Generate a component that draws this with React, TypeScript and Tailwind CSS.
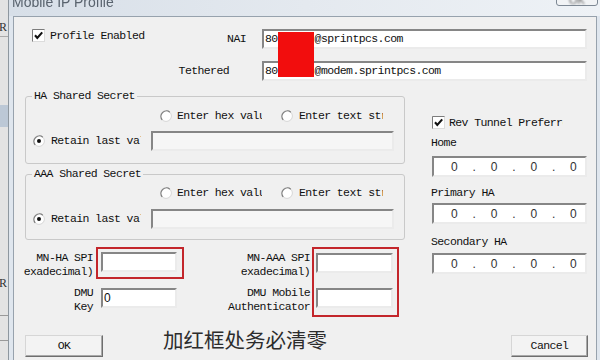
import React from 'react';

const mono = "font-['Liberation_Mono',monospace] text-[11.5px] tracking-[-0.6px] leading-[12px] text-[#101010]";
const sunken =
  'flex items-center border-2 border-t-[#868686] border-l-[#868686] border-r-[#ebebeb] border-b-[#ebebeb]';

interface FieldProps {
  className?: string;
  children?: React.ReactNode;
}

const Field: React.FC<FieldProps> = ({ className = '', children }) => (
  <div className={`${sunken} ${className}`}>{children}</div>
);

const Check: React.FC = () => (
  <svg width="13" height="13" viewBox="0 0 13 13" className="shrink-0">
    <rect x="0.5" y="0.5" width="12" height="12" fill="#fff" stroke="#dcdcdc" />
    <path d="M0.5 12.5V0.5H12.5" fill="none" stroke="#7c7c7c" />
    <path d="M3 6.3L5.3 9L10.2 3.4" fill="none" stroke="#111" strokeWidth="2.1" />
  </svg>
);

const Radio: React.FC<{ checked?: boolean }> = ({ checked }) => (
  <svg width="12" height="12" viewBox="0 0 12 12" className="shrink-0">
    <circle cx="6" cy="6" r="5.4" fill="#fff" stroke="#d6d6d6" />
    <path d="M2.2 9.8A5.4 5.4 0 0 1 9.8 2.2" fill="none" stroke="#7d7d7d" strokeWidth="1.2" />
    {checked && <circle cx="6" cy="6" r="2" fill="#111" />}
  </svg>
);

const IpField: React.FC<{ className: string }> = ({ className }) => (
  <Field
    className={`${className} ml-[1px] w-[155px] h-[21px] bg-white pl-[17px] font-['Liberation_Sans',sans-serif] text-[12px] tracking-normal text-[#333]`}
  >
    <span>0</span>
    <span className="w-[33px] text-center">.</span>
    <span>0</span>
    <span className="w-[33px] text-center">.</span>
    <span>0</span>
    <span className="w-[33px] text-center">.</span>
    <span>0</span>
  </Field>
);

interface GroupProps {
  title: string;
  className: string;
  radioMt: string;
  fieldMt: string;
}

const Group: React.FC<GroupProps> = ({ title, className, radioMt, fieldMt }) => (
  <fieldset className={`ml-[11px] w-[380px] border border-[#c9c9c9] rounded-[3px] ${className}`}>
    <legend className="ml-[6px] px-[2px] leading-[12px]">{title}</legend>
    <div className={`flex items-center h-[12px] ${radioMt}`}>
      <div className="ml-[134px] flex items-center gap-[5px]">
        <Radio />
        <span className="w-[85px] overflow-hidden whitespace-nowrap">Enter hex value</span>
      </div>
      <div className="ml-[19px] flex items-center gap-[6px]">
        <Radio />
        <span className="w-[84px] overflow-hidden whitespace-nowrap">Enter text string</span>
      </div>
    </div>
    <div className={`flex items-center h-[20px] ${fieldMt}`}>
      <div className="ml-[7px] flex items-center gap-[6px]">
        <Radio checked />
        <span className="w-[90px] overflow-hidden whitespace-nowrap">Retain last value</span>
      </div>
      <Field className="ml-[10px] w-[243px] h-[20px] bg-[#f6f6f6]" />
    </div>
  </fieldset>
);

const App: React.FC = () => {
  return (
    <div className="w-[600px] h-[360px] overflow-hidden flex bg-[#dfe6ee]">
      {/* window behind the dialog */}
      <div className="w-[9px] shrink-0 h-full bg-[#e3e3e3] border-r border-[#8e979f] overflow-hidden flex flex-col font-['Liberation_Serif',serif] text-[12px] leading-[12px] text-[#333]">
        <span className="mt-[21px] -ml-[1px]">R</span>
        <span className="mt-[3px] h-px bg-[#aaa]" />
        <span className="mt-[18px] -ml-[4px]">t</span>
        <span className="mt-[8px] -ml-[4px]">r</span>
        <span className="mt-[18px] h-[22px] bg-[#bcc8d6]" />
        <span className="mt-[150px] -ml-[1px]">R</span>
        <span className="mt-[26px] h-px bg-[#999]" />
        <span className="mt-[6px] -ml-[4px]">r</span>
        <span className="mt-[6px] h-px bg-[#999]" />
      </div>

      <div className="flex-1 min-w-0 flex flex-col">
        {/* title bar */}
        <div className="h-[16px] shrink-0 flex bg-gradient-to-r from-[#d7dfe8] via-[#e4e9ef] to-[#eef2f6]">
          <span className="-mt-[6px] ml-[3px] font-['Liberation_Sans',sans-serif] text-[14px] leading-[16px] text-[#59636e] blur-[0.6px] whitespace-nowrap">
            Mobile IP Profile
          </span>
          <div className="ml-auto mr-[2px] -mt-[10px] w-[42px] h-[16px] rounded-[3px] border border-[#7d8894] bg-[#f1f3f5] flex items-end justify-center">
            <span className="font-['Liberation_Sans',sans-serif] text-[11px] leading-[10px] text-[#666] blur-[0.8px]">OK</span>
          </div>
        </div>

        {/* dialog client */}
        <div className={`relative ml-[4px] mr-[3px] flex-1 bg-[#f0f0f0] border-l border-t border-r border-[#97a2ad] flex flex-col ${mono}`}>
          {/* NAI */}
          <div className="mt-[12px] flex h-[20px]">
            <div className="w-[248px] shrink-0 flex items-start">
              <div className="ml-[18px] flex items-center h-[13px] gap-[5px]">
                <Check />
                <span>Profile Enabled</span>
              </div>
              <span className="ml-auto mr-[16px] self-center">NAI</span>
            </div>
            <Field className="w-[325px] h-[20px] bg-white pl-[1px]">
              <span>80</span>
              <span className="w-[37px] shrink-0" />
              <span>@sprintpcs.com</span>
            </Field>
          </div>

          {/* Tethered */}
          <div className="mt-[12px] flex h-[20px]">
            <div className="w-[248px] shrink-0 flex items-center">
              <span className="ml-auto mr-[33px]">Tethered</span>
            </div>
            <Field className="w-[325px] h-[20px] bg-white pl-[1px]">
              <span>80</span>
              <span className="w-[37px] shrink-0" />
              <span>@modem.sprintpcs.com</span>
            </Field>
          </div>

          {/* redaction */}
          <div className="absolute left-[264px] top-[15px] w-[36px] h-[45px] bg-[#f20d0d]" />

          <div className="mt-[9px] flex">
            {/* left column */}
            <div className="w-[417px] shrink-0 flex flex-col">
              <Group title="HA Shared Secret" className="pb-[12px]" radioMt="mt-[8px]" fieldMt="mt-[9px]" />
              <Group title="AAA Shared Secret" className="mt-[4px] pb-[10px]" radioMt="mt-[7px]" fieldMt="mt-[10px]" />

              <div className="mt-[7px] flex">
                <div className="w-[82px] shrink-0 text-right pr-[3px] leading-[14px] pt-[4px] whitespace-nowrap">
                  <div>MN-HA SPI</div>
                  <div>exadecimal)</div>
                  <div className="mt-[7px]">DMU</div>
                  <div>Key</div>
                </div>
                <div className="w-[88px] shrink-0 flex flex-col">
                  <div className="h-[32px] border-2 border-[#c3262b] pt-[3px] pl-[3px]">
                    <Field className="w-[76px] h-[20px] bg-white" />
                  </div>
                  <Field className="mt-[9px] ml-[5px] w-[76px] h-[20px] bg-white pl-[1px] font-['Liberation_Sans',sans-serif] text-[12px] tracking-normal">
                    0
                  </Field>
                </div>
                <div className="w-[128px] shrink-0 text-right pr-[2px] leading-[14px] pt-[4px] whitespace-nowrap">
                  <div>MN-AAA SPI</div>
                  <div>exadecimal)</div>
                  <div className="mt-[7px]">DMU Mobile</div>
                  <div>Authenticator</div>
                </div>
                <div className="w-[87px] h-[70px] shrink-0 border-2 border-[#c3262b] pt-[4px] pl-[2px] flex flex-col">
                  <Field className="w-[77px] h-[20px] bg-white" />
                  <Field className="mt-[15px] w-[77px] h-[20px] bg-white" />
                </div>
              </div>
            </div>

            {/* right column */}
            <div className="w-[156px] shrink-0 flex flex-col">
              <div className="mt-[26px] ml-[1px] flex items-center h-[13px] gap-[4px]">
                <Check />
                <span className="w-[114px] overflow-hidden whitespace-nowrap">Rev Tunnel Preferred</span>
              </div>
              <span className="mt-[8px]">Home</span>
              <IpField className="mt-[7px]" />
              <span className="mt-[10px]">Primary HA</span>
              <IpField className="mt-[4px]" />
              <span className="mt-[12px]">Secondary HA</span>
              <IpField className="mt-[5px]" />
            </div>
          </div>

          {/* buttons */}
          <div className="mt-[10px] flex items-start">
            <button className="mt-[8px] ml-[11px] w-[78px] h-[22px] bg-[#f3f3f3] border border-[#d6d6d6] border-r-[#6e6e6e] border-b-[#6e6e6e] shadow-[inset_-1px_-1px_0_#a9a9a9]">
              OK
            </button>
            <span className="ml-[60px] font-['Noto_Sans_CJK_SC',sans-serif] text-[20.5px] tracking-normal leading-[24px] text-[#2c2c2c] whitespace-nowrap">
              加红框处务必清零
            </span>
            <button className="ml-auto mr-[8px] mt-[8px] w-[77px] h-[22px] bg-[#f3f3f3] border border-[#d6d6d6] border-r-[#6e6e6e] border-b-[#6e6e6e] shadow-[inset_-1px_-1px_0_#a9a9a9]">
              Cancel
            </button>
          </div>
        </div>
      </div>
    </div>
  );
};

export default App;
